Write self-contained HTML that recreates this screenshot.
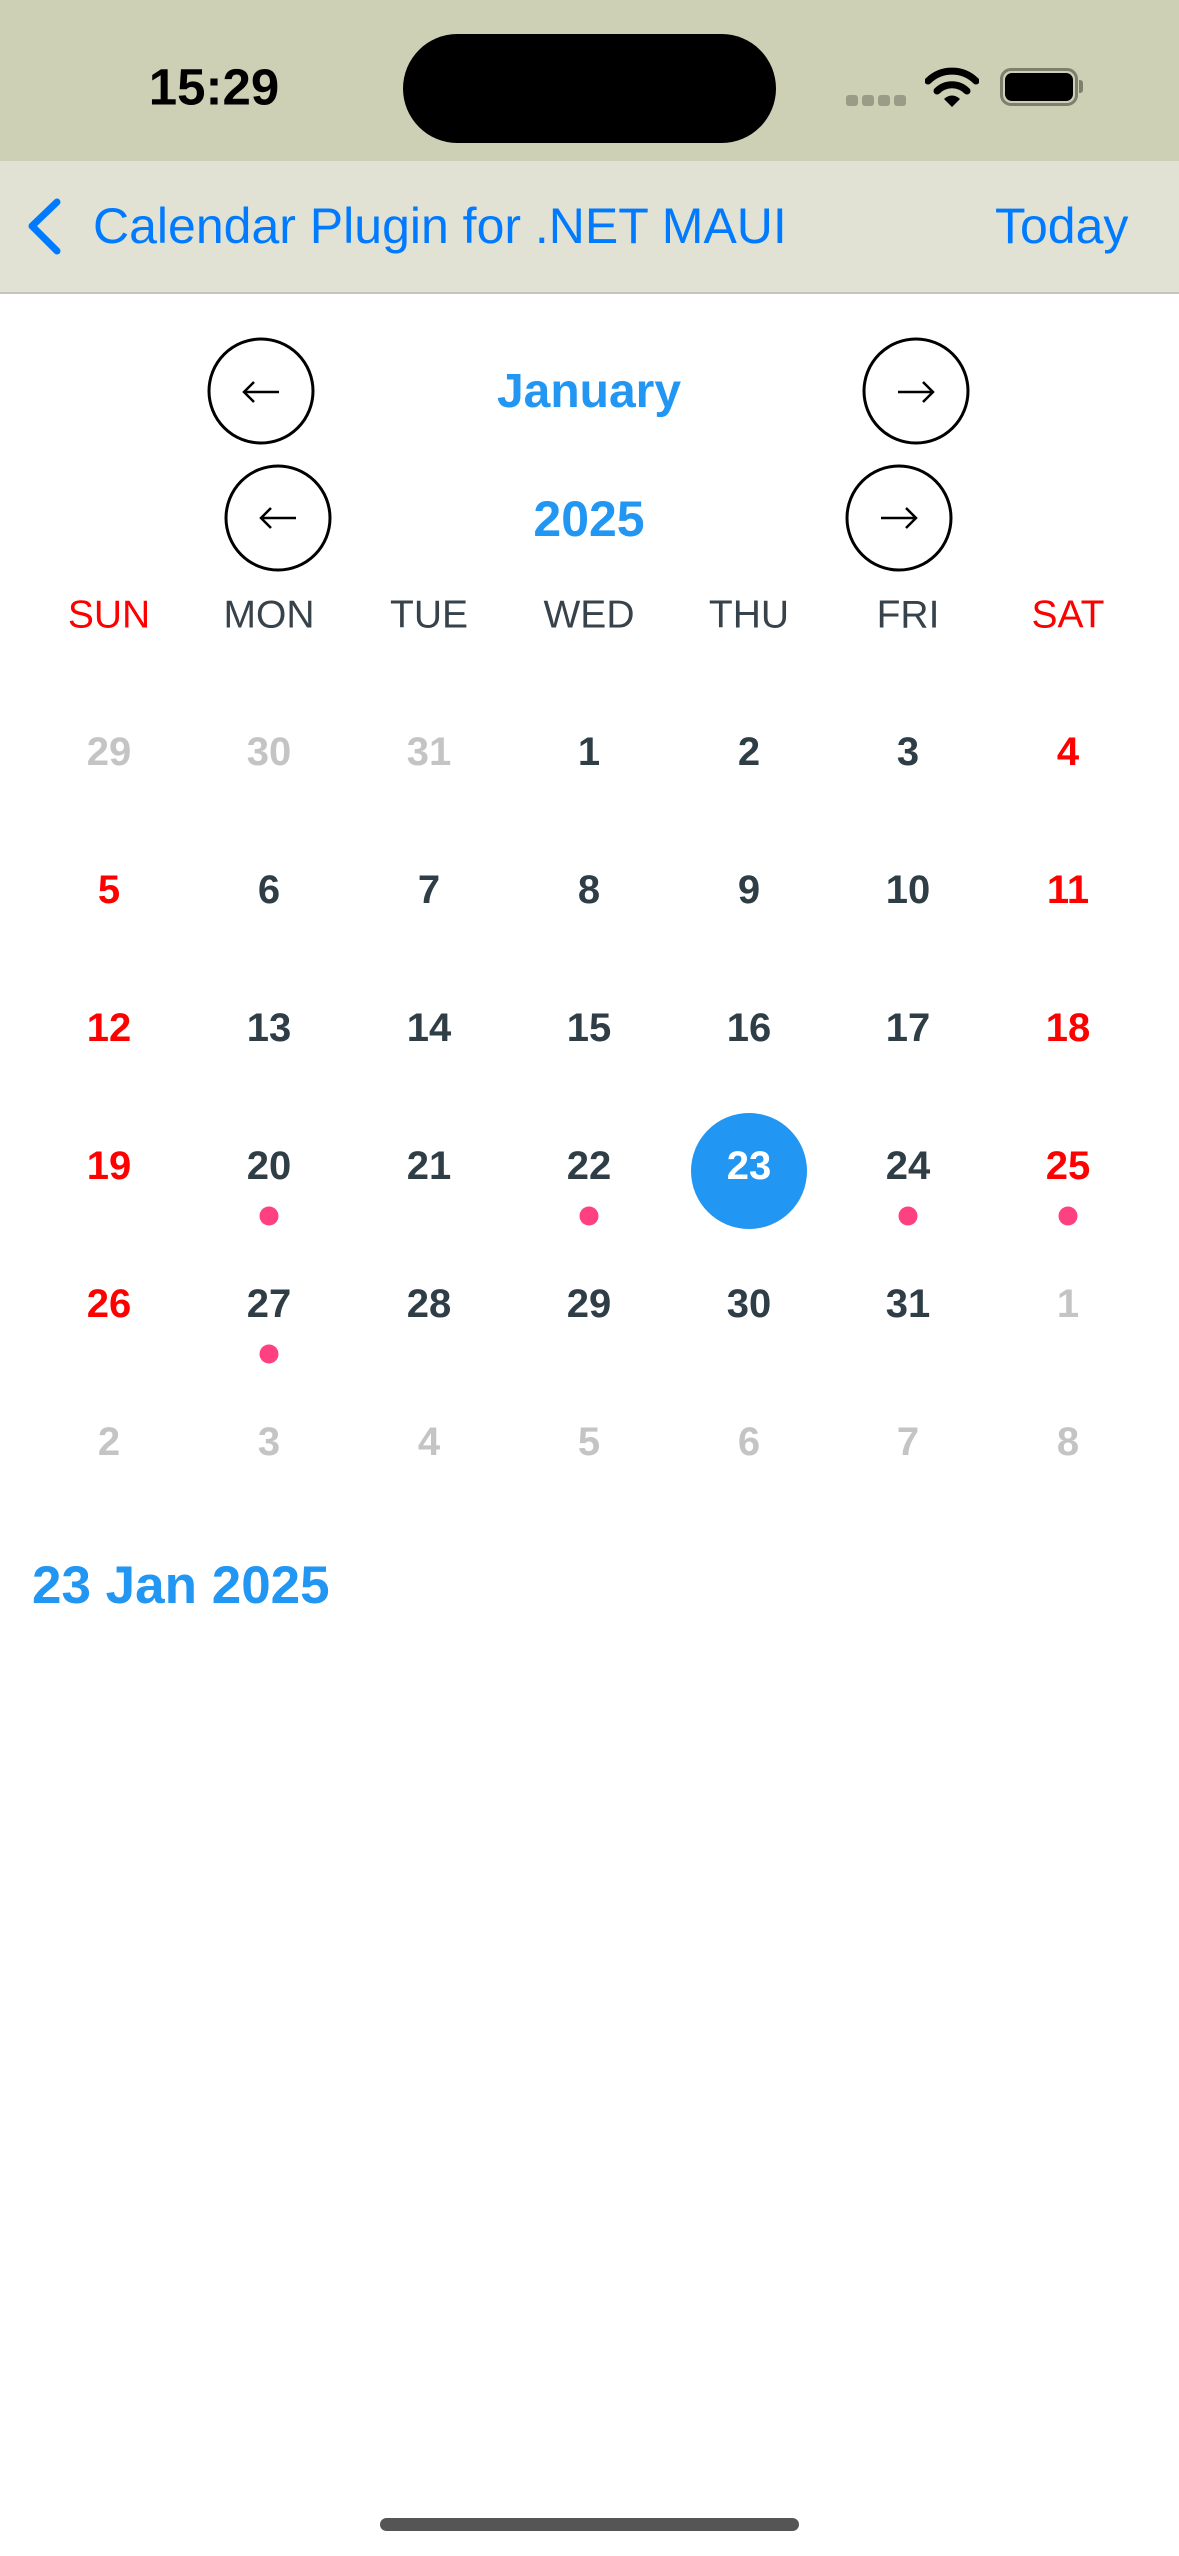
<!DOCTYPE html>
<html><head><meta charset="utf-8">
<style>
*{margin:0;padding:0;box-sizing:border-box}
body{width:1179px;height:2556px;background:#fff;position:relative;overflow:hidden;font-family:"Liberation Sans",sans-serif}
.a{position:absolute}
.status{left:0;top:0;width:1179px;height:161px;background:#cdd0b5}
.nav{left:0;top:161px;width:1179px;height:133px;background:#e1e2d4;border-bottom:2px solid #c4c4b8}
.c{position:absolute;transform:translate(-50%,-50%);white-space:nowrap;line-height:1}
.circ{position:absolute;width:107px;height:107px;border:3px solid #000;border-radius:50%;transform:translate(-50%,-50%)}
.arr{position:absolute;transform:translate(-50%,-50%)}
.wd{font-size:39px;color:#37424a}
.d{font-size:40px;font-weight:bold;color:#2f3e46}
.g{color:#c4c4c4}
.r{color:#ff0000}
.dot{position:absolute;width:19px;height:19px;border-radius:50%;background:#ff4081;transform:translate(-50%,-50%)}
</style></head><body>
<div class="a status"></div>
<div class="c" style="left:214px;top:87px;font-size:51px;font-weight:bold;color:#000">15:29</div>
<div class="a" style="left:403px;top:34px;width:373px;height:109px;background:#000;border-radius:55px"></div>
<div class="a" style="left:846px;top:95px;width:12px;height:11px;background:#9a9c88;border-radius:3px"></div>
<div class="a" style="left:862px;top:95px;width:12px;height:11px;background:#9a9c88;border-radius:3px"></div>
<div class="a" style="left:878px;top:95px;width:12px;height:11px;background:#9a9c88;border-radius:3px"></div>
<div class="a" style="left:894px;top:95px;width:12px;height:11px;background:#9a9c88;border-radius:3px"></div>
<svg class="a" style="left:925px;top:66px" width="54" height="42" viewBox="0 0 54 42">
<path d="M3 15 A34 34 0 0 1 51 15" stroke="#000" stroke-width="7" fill="none" stroke-linecap="round"/>
<path d="M12 25 A21 21 0 0 1 42 25" stroke="#000" stroke-width="7" fill="none" stroke-linecap="round"/>
<path d="M19 33 L27 41 L35 33 A11 11 0 0 0 19 33Z" fill="#000"/>
</svg>
<div class="a" style="left:1000px;top:68px;width:78px;height:38px;border:3px solid #7d806c;border-radius:11px"></div>
<div class="a" style="left:1005px;top:73px;width:68px;height:28px;background:#000;border-radius:7px"></div>
<div class="a" style="left:1079px;top:80px;width:4px;height:13px;background:#7d806c;border-radius:0 3px 3px 0"></div>

<div class="a nav"></div>
<svg class="a" style="left:24px;top:195px" width="42" height="62" viewBox="0 0 42 62"><path d="M33 7 L8 31 L33 56" stroke="#007aff" stroke-width="7" fill="none" stroke-linecap="round" stroke-linejoin="round"/></svg>
<div class="a" style="left:93px;top:198px;font-size:50px;color:#007aff;line-height:56px;white-space:nowrap">Calendar Plugin for .NET MAUI</div>
<div class="a" style="left:995px;top:198px;font-size:50px;color:#007aff;line-height:56px">Today</div>

<div class="circ" style="left:261px;top:391px"></div>
<svg class="arr" style="left:261px;top:392px" width="40" height="26" viewBox="0 0 40 26"><path d="M38 13 H3 M13 3 L3 13 L13 23" stroke="#000" stroke-width="2.5" fill="none"/></svg>
<div class="circ" style="left:916px;top:391px"></div>
<svg class="arr" style="left:916px;top:392px" width="40" height="26" viewBox="0 0 40 26"><path d="M2 13 H37 M27 3 L37 13 L27 23" stroke="#000" stroke-width="2.5" fill="none"/></svg>
<div class="c" style="left:589px;top:392px;font-size:48px;font-weight:bold;color:#2196f3">January</div>
<div class="circ" style="left:278px;top:518px"></div>
<svg class="arr" style="left:278px;top:518px" width="40" height="26" viewBox="0 0 40 26"><path d="M38 13 H3 M13 3 L3 13 L13 23" stroke="#000" stroke-width="2.5" fill="none"/></svg>
<div class="circ" style="left:899px;top:518px"></div>
<svg class="arr" style="left:899px;top:518px" width="40" height="26" viewBox="0 0 40 26"><path d="M2 13 H37 M27 3 L37 13 L27 23" stroke="#000" stroke-width="2.5" fill="none"/></svg>
<div class="c" style="left:589px;top:519px;font-size:50px;font-weight:bold;color:#2196f3">2025</div>

<div class="c wd r" style="left:109px;top:615px">SUN</div>
<div class="c wd" style="left:269px;top:615px">MON</div>
<div class="c wd" style="left:429px;top:615px">TUE</div>
<div class="c wd" style="left:589px;top:615px">WED</div>
<div class="c wd" style="left:749px;top:615px">THU</div>
<div class="c wd" style="left:908px;top:615px">FRI</div>
<div class="c wd r" style="left:1068px;top:615px">SAT</div>

<div class="a" style="left:691px;top:1113px;width:116px;height:116px;border-radius:50%;background:#2196f3"></div>

<div class="c d g" style="left:109px;top:752px">29</div>
<div class="c d g" style="left:269px;top:752px">30</div>
<div class="c d g" style="left:429px;top:752px">31</div>
<div class="c d" style="left:589px;top:752px">1</div>
<div class="c d" style="left:749px;top:752px">2</div>
<div class="c d" style="left:908px;top:752px">3</div>
<div class="c d r" style="left:1068px;top:752px">4</div>
<div class="c d r" style="left:109px;top:890px">5</div>
<div class="c d" style="left:269px;top:890px">6</div>
<div class="c d" style="left:429px;top:890px">7</div>
<div class="c d" style="left:589px;top:890px">8</div>
<div class="c d" style="left:749px;top:890px">9</div>
<div class="c d" style="left:908px;top:890px">10</div>
<div class="c d r" style="left:1068px;top:890px">11</div>
<div class="c d r" style="left:109px;top:1028px">12</div>
<div class="c d" style="left:269px;top:1028px">13</div>
<div class="c d" style="left:429px;top:1028px">14</div>
<div class="c d" style="left:589px;top:1028px">15</div>
<div class="c d" style="left:749px;top:1028px">16</div>
<div class="c d" style="left:908px;top:1028px">17</div>
<div class="c d r" style="left:1068px;top:1028px">18</div>
<div class="c d r" style="left:109px;top:1166px">19</div>
<div class="c d" style="left:269px;top:1166px">20</div>
<div class="c d" style="left:429px;top:1166px">21</div>
<div class="c d" style="left:589px;top:1166px">22</div>
<div class="c d" style="left:749px;top:1166px;color:#fff">23</div>
<div class="c d" style="left:908px;top:1166px">24</div>
<div class="c d r" style="left:1068px;top:1166px">25</div>
<div class="dot" style="left:269px;top:1216px"></div>
<div class="dot" style="left:589px;top:1216px"></div>
<div class="dot" style="left:908px;top:1216px"></div>
<div class="dot" style="left:1068px;top:1216px"></div>
<div class="c d r" style="left:109px;top:1304px">26</div>
<div class="c d" style="left:269px;top:1304px">27</div>
<div class="c d" style="left:429px;top:1304px">28</div>
<div class="c d" style="left:589px;top:1304px">29</div>
<div class="c d" style="left:749px;top:1304px">30</div>
<div class="c d" style="left:908px;top:1304px">31</div>
<div class="c d g" style="left:1068px;top:1304px">1</div>
<div class="dot" style="left:269px;top:1354px"></div>
<div class="c d g" style="left:109px;top:1442px">2</div>
<div class="c d g" style="left:269px;top:1442px">3</div>
<div class="c d g" style="left:429px;top:1442px">4</div>
<div class="c d g" style="left:589px;top:1442px">5</div>
<div class="c d g" style="left:749px;top:1442px">6</div>
<div class="c d g" style="left:908px;top:1442px">7</div>
<div class="c d g" style="left:1068px;top:1442px">8</div>

<div class="a" style="left:32px;top:1558px;font-size:53px;font-weight:bold;color:#2196f3;line-height:56px">23 Jan 2025</div>

<div class="a" style="left:380px;top:2518px;width:419px;height:13px;border-radius:7px;background:#555"></div>
</body></html>
